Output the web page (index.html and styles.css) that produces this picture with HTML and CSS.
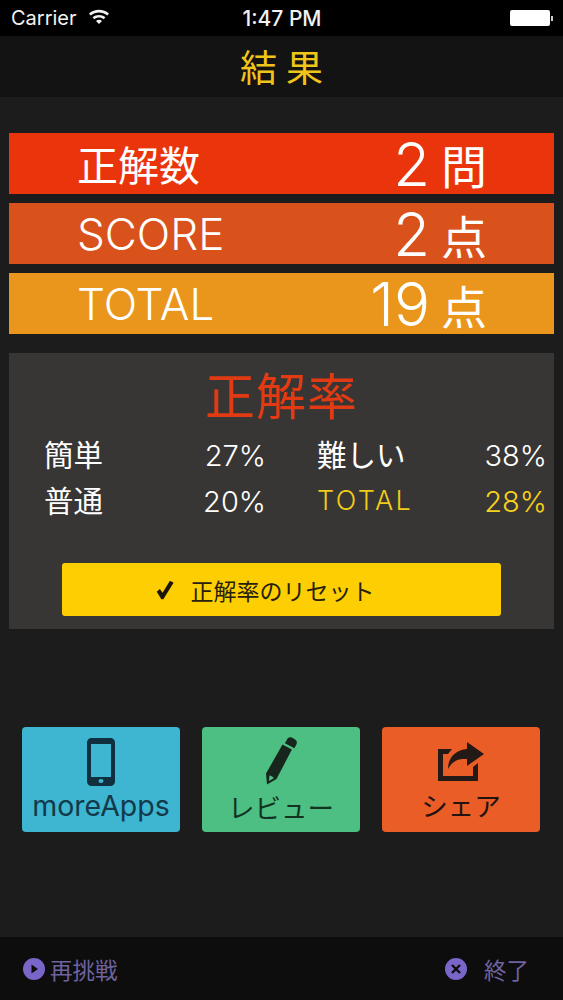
FILE: index.html
```html
<!DOCTYPE html>
<html lang="ja">
<head>
<meta charset="utf-8">
<title>結果</title>
<link rel="stylesheet" href="styles.css">
</head>
<body>
<div class="app">
  <header class="status">
    <div class="status-left">
      <span>Carrier</span>
      <svg class="wifi" viewBox="0 0 22 16"><path d="M1 5.600C6.700.6 15.300.6 21 5.600l-1.700 1.900C14.600 3.400 7.400 3.400 2.700 7.500z"/><path d="M4.600 9.300c3.700-3.200 9.100-3.200 12.800 0l-1.700 1.900c-2.700-2.300-6.700-2.300-9.400 0z"/><path d="M8 12.900c1.800-1.500 4.200-1.500 6 0l-3 3.100z"/></svg>
    </div>
    <span class="status-time">1:47 PM</span>
    <div class="battery"><span class="battery-body"></span><span class="battery-tip"></span></div>
  </header>
  <nav class="nav"><span>結</span><span>果</span></nav>
  <main class="content">
    <section class="scores">
      <div class="score score-red"><span class="score-label cjk">正解数</span><span class="score-value">2<span class="unit">問</span></span></div>
      <div class="score score-orange"><span class="score-label">SCORE</span><span class="score-value">2<span class="unit">点</span></span></div>
      <div class="score score-amber"><span class="score-label">TOTAL</span><span class="score-value">19<span class="unit">点</span></span></div>
    </section>
    <section class="panel">
      <h2 class="panel-title">正解率</h2>
      <div class="rates">
        <div class="rate-col rate-col-left">
          <span class="rate-label">簡単</span><span class="rate-value">27%</span>
          <span class="rate-label">普通</span><span class="rate-value">20%</span>
        </div>
        <div class="rate-col rate-col-right">
          <span class="rate-label">難しい</span><span class="rate-value">38%</span>
          <span class="rate-label total">TOTAL</span><span class="rate-value total-value">28%</span>
        </div>
      </div>
      <button class="reset">
        <svg class="check" viewBox="0 0 20 20"><path d="M2.500 11.500l2.800-2.300 2.500 3.400L14.500 1.500l3.300 1.900L8.500 18.500h-1.800z"/></svg>
        <span>正解率のリセット</span>
      </button>
    </section>
    <section class="actions">
      <button class="action action-blue">
        <svg class="icon" viewBox="0 0 28 48"><path fill-rule="evenodd" d="M4.500 0h19A4.500 4.500 0 0 1 28 4.500v39a4.500 4.500 0 0 1-4.500 4.500h-19A4.500 4.500 0 0 1 0 43.500v-39A4.500 4.500 0 0 1 4.500 0zM4 6v33h20V6zM14 41a2.500 2 0 1 0 0 4 2.500 2 0 0 0 0-4z"/></svg>
        <span class="action-label">moreApps</span>
      </button>
      <button class="action action-green">
        <svg class="icon" viewBox="0 0 32 48"><path fill-rule="evenodd" d="M22 2.500c1-2 3-2.800 5.200-1.700l2.600 1.400c2 1.100 2.600 3.200 1.600 5.200l-2 3.800-9.500-5zM17.500 7.600l9.400 5L11.500 42 2 47.500 1 36.500zM4.500 38.500l-.6 5.500 4.800-2.800c-.4-1.300-2.700-2.800-4.200-2.700z"/></svg>
        <span class="action-label">レビュー</span>
      </button>
      <button class="action action-red">
        <svg class="icon share" viewBox="0 0 46 40"><path d="M0 7h14l-4 5H5v22h30v-9l5-4v18H0z"/><path d="M29 0l17 12-17 12v-7c-8-.5-14 1-19 10C10 16 17 8 29 7z"/></svg>
        <span class="action-label">シェア</span>
      </button>
    </section>
  </main>
  <footer class="footer">
    <div class="foot-item">
      <svg class="foot-icon" viewBox="0 0 22 22"><circle cx="11" cy="11" r="11" fill="#7a66c8"/><path d="M8.500 6.500l6.500 4.500-6.500 4.500z" fill="#0e0d0e"/></svg>
      <span>再挑戦</span>
    </div>
    <div class="foot-item foot-end">
      <svg class="foot-icon" viewBox="0 0 22 22"><circle cx="11" cy="11" r="11" fill="#7a66c8"/><path d="M7 7l8 8M15 7l-8 8" stroke="#0e0d0e" stroke-width="2.400" fill="none"/></svg>
      <span>終了</span>
    </div>
  </footer>
</div>
</body>
</html>
```
FILE: styles.css
```css
* { box-sizing: border-box; }
html, body { margin: 0; padding: 0; }
body {
  width: 563px;
  height: 1000px;
  overflow: hidden;
  background: #1d1c1d;
  font-family: "Noto Sans CJK JP", sans-serif;
  font-weight: 400;
}
.app { display: flex; flex-direction: column; height: 1000px; }
.status {
  height: 36px;
  background: #000;
  color: #f2f2f2;
  display: grid;
  grid-template-columns: 1fr auto 1fr;
  align-items: center;
  padding: 0 10px 0 11px;
  font: 400 20px "Inter", sans-serif;
}
.status-left { display: flex; align-items: center; gap: 11px; }
.wifi { width: 22px; height: 16px; fill: #f2f2f2; margin-bottom: 4px; }
.status-time { font-weight: 500; font-size: 21px; }
.battery { justify-self: end; display: flex; align-items: center; }
.battery-body { width: 40px; height: 16px; background: #fff; border-radius: 2px; }
.battery-tip { width: 2px; height: 5px; background: #ccc; margin-left: 1px; }
.nav {
  height: 61px;
  background: #131313;
  color: #f0c419;
  display: flex;
  align-items: center;
  justify-content: center;
  gap: 9px;
  font-size: 37px;
  line-height: 1;
}
.content { flex: 1; display: flex; flex-direction: column; padding: 36px 9px 0; }
.scores { display: flex; flex-direction: column; gap: 9px; }
.score {
  height: 61px;
  display: flex;
  align-items: center;
  justify-content: space-between;
  color: #fff;
  padding: 0 67px 0 68px;
}
.score-red { background: #ea340c; }
.score-orange { background: #d9521c; }
.score-amber { background: #ea951b; }
.score-label { font: 300 44px "Inter", sans-serif; line-height: 1; }
.score-label.cjk { font: 400 41px "Noto Sans CJK JP", sans-serif; line-height: 1; }
.score-value { font: 300 60px "Inter", sans-serif; line-height: 1; display: flex; align-items: center; gap: 11px; }
.unit { font: 400 46px "Noto Sans CJK JP", sans-serif; line-height: 1; }
.panel {
  height: 276px;
  margin-top: 19px;
  background: #383634;
  display: flex;
  flex-direction: column;
  align-items: center;
}
.panel-title {
  margin: 12px 0 0;
  color: #e23a12;
  font-size: 50px;
  font-weight: 400;
  line-height: 56px;
  letter-spacing: 1px;
}
.rates {
  width: 100%;
  display: flex;
  gap: 51px;
  margin-top: 10px;
  padding: 0 7px 0 35px;
  color: #fff;
}
.rate-col {
  display: grid;
  grid-template-columns: 1fr auto;
  grid-auto-rows: 46px;
  align-items: center;
}
.rate-col-left { width: 222px; }
.rate-col-right { width: 230px; }
.rate-label { font-size: 29.500px; line-height: 1; white-space: nowrap; }
.rate-value { font: 300 29px "Inter", sans-serif; line-height: 1; justify-self: end; white-space: nowrap; padding-top: 2px; }
.total { color: #f2cc18; font: 300 27px "Inter", sans-serif; letter-spacing: 2.400px; }
.total-value { color: #f6d21c; }
.reset {
  width: 439px;
  height: 53px;
  margin-top: 40px;
  border: 0;
  border-radius: 3px;
  background: #fdce02;
  color: #262010;
  display: flex;
  align-items: center;
  justify-content: center;
  gap: 15px;
  padding: 0 35px 0 0;
  font: 400 23px "Noto Sans CJK JP", sans-serif;
}
.check { width: 22px; height: 22px; fill: #1a1608; }
.actions { display: flex; justify-content: space-between; padding: 0 14px 0 13px; margin-top: 98px; }
.action {
  width: 158px;
  height: 105px;
  border: 0;
  border-radius: 4px;
  padding: 0;
  display: flex;
  flex-direction: column;
  align-items: center;
  color: #123a4a;
}
.action-blue { background: #3eb5d1; padding-top: 11px; }
.action-green { background: #4ebf82; padding-top: 10px; color: #123322; }
.action-red { background: #ea5d26; padding-top: 15px; color: #22130e; }
.icon { width: 28px; height: 48px; fill: #10303f; }
.action-green .icon { width: 32px; height: 48px; fill: #16261d; }
.action-red .share { width: 46px; height: 40px; fill: #231a18; }
.action-label { font: 400 26.500px/32px "Noto Sans CJK JP", sans-serif; margin-top: 5px; }
.action-blue .action-label { margin-top: 4px; font: 400 28.500px/32px "Inter", sans-serif; }
.action-green .action-label { margin-top: 6px; }
.action-red .action-label { margin-top: 7px; }
.footer {
  height: 63px;
  background: #0e0d0e;
  color: #6f639f;
  display: flex;
  align-items: center;
  justify-content: space-between;
  padding: 0 34px 0 23px;
  font-size: 22.500px;
}
.foot-item { display: flex; align-items: center; gap: 5px; }
.foot-end { gap: 17px; }
.foot-icon { width: 22px; height: 22px; }
```
